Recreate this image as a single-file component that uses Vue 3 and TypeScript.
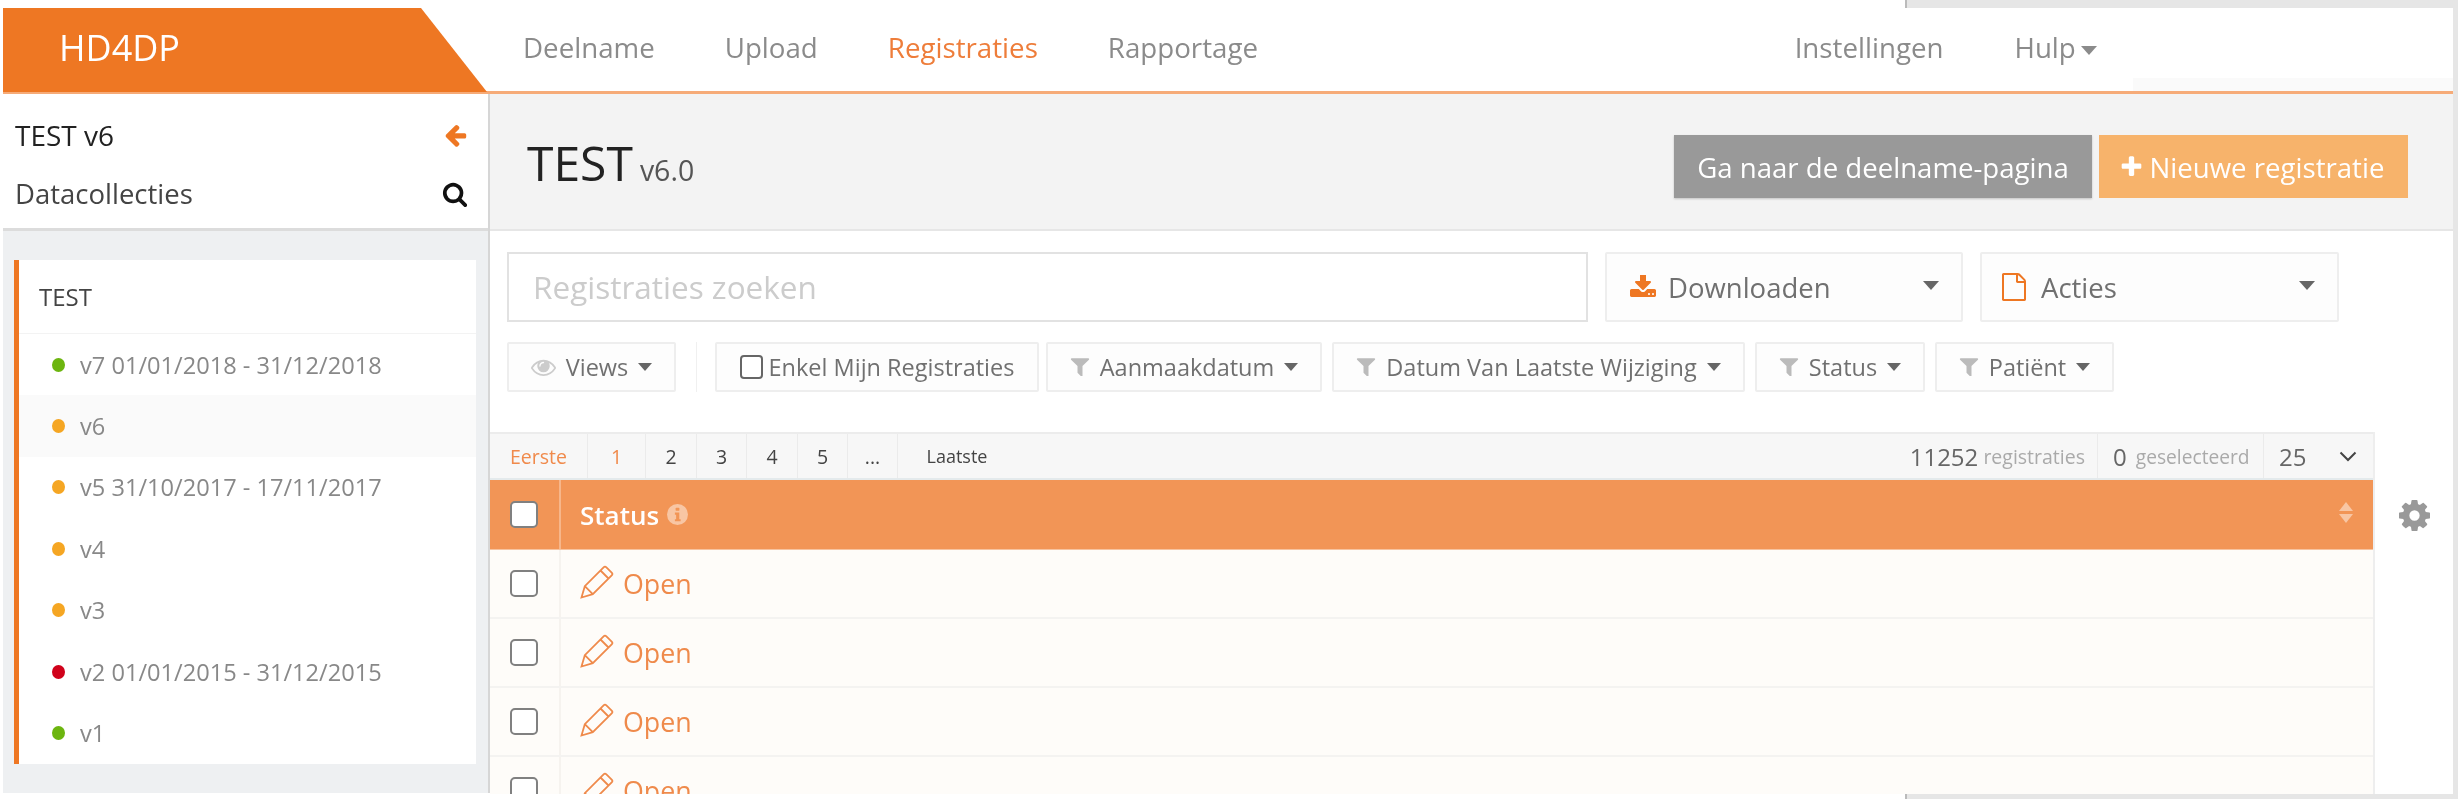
<script setup lang="ts">
interface Version { label: string; color: string; active?: boolean }
const versions: Version[] = [
  { label: 'v7 01/01/2018 - 31/12/2018', color: '#6cb50f' },
  { label: 'v6', color: '#f5a623', active: true },
  { label: 'v5 31/10/2017 - 17/11/2017', color: '#f5a623' },
  { label: 'v4', color: '#f5a623' },
  { label: 'v3', color: '#f5a623' },
  { label: 'v2 01/01/2015 - 31/12/2015', color: '#d0021b' },
  { label: 'v1', color: '#6cb50f' },
]
const filters = [
  { label: 'Aanmaakdatum', cls: 'f-aanmaak' },
  { label: 'Datum Van Laatste Wijziging', cls: 'f-datum' },
  { label: 'Status', cls: 'f-status' },
  { label: 'Patiënt', cls: 'f-patient' },
]
const pages = ['Eerste', '1', '2', '3', '4', '5', '...', 'Laatste']
const rows = [1, 2, 3, 4]
const filterPath = 'M1595 295q17 41-14 70l-493 493v742q0 42-39 59-13 5-25 5-27 0-45-19l-256-256q-19-19-19-45v-486l-493-493q-31-29-14-70 17-39 59-39h1280q42 0 59 39z'
</script>

<template>
  <div class="page">
    <div class="edge edge-top"></div>
    <div class="edge edge-right"></div>
    <div class="edge edge-bottom"></div>

    <div class="frame">
      <header class="topbar">
        <div class="logo">HD4DP</div>
        <nav class="nav">
          <a>Deelname</a>
          <a>Upload</a>
          <a class="current">Registraties</a>
          <a>Rapportage</a>
        </nav>
        <nav class="nav nav-right">
          <a>Instellingen</a>
          <a>Hulp <i class="caret caret-nav"></i></a>
        </nav>
        <div class="top-strip"></div>
      </header>

      <div class="body">
        <aside class="sidebar">
          <div class="side-head">
            <div class="side-row strong">
              <span>TEST v6</span>
              <svg class="ic-arrow" viewBox="0 0 1792 1792"><path d="M1664 896v128q0 53-32.500 90.500t-84.500 37.500h-704l293 294q38 36 38 90t-38 90l-75 76q-37 37-90 37-52 0-91-37l-651-652q-37-37-37-90 0-52 37-91l651-650q38-38 91-38 52 0 90 38l75 74q38 38 38 91t-38 91l-293 293h704q52 0 84.500 37.500t32.500 90.500z"/></svg>
            </div>
            <div class="side-row">
              <span>Datacollecties</span>
              <svg class="ic-search" viewBox="0 0 1792 1792"><path d="M1216 832q0-185-131.500-316.500t-316.500-131.500-316.500 131.500-131.500 316.500 131.500 316.500 316.500 131.500 316.500-131.500 131.500-316.500zm512 832q0 52-38 90t-90 38q-54 0-90-38l-343-342q-179 124-399 124-143 0-273.500-55.500t-225-150-150-225-55.500-273.500 55.500-273.500 150-225 225-150 273.500-55.500 273.500 55.500 225 150 150 225 55.500 273.500q0 220-124 399l343 343q37 37 37 90z"/></svg>
            </div>
          </div>
          <div class="panel">
            <div class="panel-title">TEST</div>
            <div v-for="v in versions" :key="v.label" class="version" :class="{ active: v.active }">
              <span class="dot" :style="{ background: v.color }"></span>
              <span>{{ v.label }}</span>
            </div>
          </div>
        </aside>

        <main class="main">
          <div class="title-strip">
            <h1 class="title"><span>TEST</span><small>v6.0</small></h1>
            <div class="title-actions">
              <button class="btn btn-grey">Ga naar de deelname-pagina</button>
              <button class="btn btn-orange">
                <svg class="ic-plus" viewBox="0 0 1792 1792"><path d="M1600 736v192q0 40-28 68t-68 28h-416v416q0 40-28 68t-68 28h-192q-40 0-68-28t-28-68v-416h-416q-40 0-68-28t-28-68v-192q0-40 28-68t68-28h416v-416q0-40 28-68t68-28h192q40 0 68 28t28 68v416h416q40 0 68 28t28 68z"/></svg>
                Nieuwe registratie
              </button>
            </div>
          </div>

          <div class="toolbar">
            <div class="search">Registraties zoeken</div>
            <div class="select select-down">
              <svg class="ic-down" viewBox="0 128 1792 1536"><path d="M1344 1344q0-26-19-45t-45-19-45 19-19 45 19 45 45 19 45-19 19-45zm256 0q0-26-19-45t-45-19-45 19-19 45 19 45 45 19 45-19 19-45zm128-224v320q0 40-28 68t-68 28h-1472q-40 0-68-28t-28-68v-320q0-40 28-68t68-28h465l135 136q58 56 136 56t136-56l136-136h464q40 0 68 28t28 68zm-325-569q17 41-14 70l-448 448q-18 19-45 19t-45-19l-448-448q-31-29-14-70 17-39 59-39h256v-448q0-26 19-45t45-19h256q26 0 45 19t19 45v448h256q42 0 59 39z"/></svg>
              <span>Downloaden</span>
              <i class="caret caret-big"></i>
            </div>
            <div class="select select-acties">
              <svg class="ic-file" viewBox="128 0 1536 1792"><path d="M1596 380q28 28 48 76t20 88v1152q0 40-28 68t-68 28h-1344q-40 0-68-28t-28-68v-1600q0-40 28-68t68-28h896q40 0 88 20t76 48zm-444-244v376h376q-10-29-22-41l-313-313q-12-12-41-22zm384 1528v-1024h-416q-40 0-68-28t-28-68v-416h-768v1536h1280z"/></svg>
              <span>Acties</span>
              <i class="caret caret-big"></i>
            </div>
          </div>

          <div class="filters">
            <button class="fbtn f-views">
              <svg class="ic-eye" viewBox="0 256 1792 1280"><path d="M1664 960q-152-236-381-353 61 104 61 225 0 185-131.500 316.500t-316.500 131.500-316.500-131.500-131.500-316.500q0-121 61-225-229 117-381 353 133 205 333.500 326.500t434.500 121.500 434.500-121.500 333.500-326.500zm-720-384q0-20-14-34t-34-14q-125 0-214.500 89.500t-89.500 214.500q0 20 14 34t34 14 34-14 14-34q0-86 61-147t147-61q20 0 34-14t14-34zm848 384q0 34-20 69-140 230-376.500 368.500t-499.500 138.500-499.500-139-376.500-368q-20-35-20-69t20-69q140-229 376.500-368t499.500-139 499.500 139 376.500 368q20 35 20 69z"/></svg>
              <span>Views</span>
              <i class="caret caret-small"></i>
            </button>
            <span class="fsep"></span>
            <button class="fbtn f-mine">
              <i class="check check-small"></i>
              <span>Enkel Mijn Registraties</span>
            </button>
            <button v-for="f in filters" :key="f.label" class="fbtn" :class="f.cls">
              <svg class="ic-filter" viewBox="128 256 1536 1344"><path :d="filterPath"/></svg>
              <span>{{ f.label }}</span>
              <i class="caret caret-small"></i>
            </button>
          </div>

          <div class="table-line">
            <div class="table">
              <div class="pager">
                <div class="pages">
                  <span v-for="(p, i) in pages" :key="p" class="pg" :class="{ on: i < 2, first: i === 0, last: i === pages.length - 1 }">{{ p }}</span>
                </div>
                <div class="stats">
                  <span class="stat stat-total"><b>11252</b> registraties</span>
                  <span class="stat stat-sel"><b>0</b> geselecteerd</span>
                  <span class="stat stat-size"><b>25</b>
                    <svg class="ic-chev" viewBox="0 0 18 11"><path d="M1.500 1.500 9 9l7.500-7.500" /></svg>
                  </span>
                </div>
              </div>
              <div class="thead">
                <div class="cell-check"><i class="check check-head"></i></div>
                <div class="cell-status">
                  <span class="th-label">Status</span>
                  <svg class="ic-info" viewBox="0 0 20 20">
                    <circle cx="10" cy="10" r="10" />
                    <rect x="8.200" y="3.500" width="3.600" height="3" rx=".8" />
                    <path d="M7.500 8.200h4.200v6.300h1.300v2H7.500v-2h1.200v-4.300H7.500z" />
                  </svg>
                  <svg class="ic-sort" viewBox="0 0 16 21">
                    <path class="up" d="M8 0l7 9H1z" />
                    <path class="dn" d="M1 12h14l-7 9z" />
                  </svg>
                </div>
              </div>
              <div v-for="r in rows" :key="r" class="trow">
                <div class="cell-check"><i class="check"></i></div>
                <div class="cell-status cell-open">
                  <svg class="ic-pencil" viewBox="0 0 34 34"><path d="M1.500 32.500 4.800 21.200 23.600 2.300a2 2 0 0 1 2.800 0l5.300 5.300a2 2 0 0 1 0 2.800L12.800 29.200zM4.800 21.200l8 8M20.500 5.500l8 8"/></svg>
                  <span>Open</span>
                </div>
              </div>
            </div>
            <svg class="ic-gear" viewBox="128 128 1536 1536"><path d="M1152 896q0-106-75-181t-181-75-181 75-75 181 75 181 181 75 181-75 75-181zm512-109v222q0 12-8 23t-20 13l-185 28q-19 54-39 91 35 50 107 138 10 12 10 25t-9 23q-27 37-99 108t-94 71q-12 0-26-9l-138-108q-44 23-91 38-16 136-29 186-7 28-36 28h-222q-14 0-24.500-8.500t-11.500-21.500l-28-184q-49-16-90-37l-141 107q-10 9-25 9-14 0-25-11-126-114-165-168-7-10-7-23 0-12 8-23 15-21 51-66.500t54-70.500q-27-50-41-99l-183-27q-13-2-21-12.500t-8-23.500v-222q0-12 8-23t19-13l186-28q14-46 39-92-40-57-107-138-10-12-10-24 0-10 9-23 26-36 98.500-107.500t94.500-71.500q13 0 26 10l138 107q44-23 91-38 16-136 29-186 7-28 36-28h222q14 0 24.500 8.500t11.500 21.500l28 184q49 16 90 37l142-107q9-9 24-9 13 0 25 10 129 119 165 170 7 8 7 22 0 12-8 23-15 21-51 66.500t-54 70.500q26 50 41 98l183 28q13 2 21 12.500t8 23.500z"/></svg>
          </div>
        </main>
      </div>
    </div>
  </div>
</template>

<style scoped>
* { box-sizing: border-box; }
.page {
  position: relative;
  width: 2458px;
  height: 799px;
  overflow: hidden;
  background: #fff;
  font-family: "Open Sans", sans-serif;
  color: #555;
}
.edge { position: absolute; background: #e6e6e6; }
.edge-top { top: 0; left: 1905px; right: 0; height: 8px; border-left: 2px solid #bbb; }
.edge-right { top: 0; bottom: 0; right: 0; width: 5px; }
.edge-bottom { bottom: 0; left: 1905px; right: 0; height: 5px; border-left: 2px solid #bbb; }

.frame {
  position: relative;
  margin: 8px 5px 0 3px;
  height: 786px;
  display: flex;
  flex-direction: column;
  overflow: hidden;
  background: #fff;
  filter: blur(.45px);
}

/* Top bar */
.topbar {
  position: relative;
  flex: none;
  height: 86px;
  display: flex;
  border-bottom: 3px solid #f6ab78;
}
.logo {
  width: 484px;
  height: 84px;
  padding: 16px 0 0 56px;
  flex: none;
  background: #ee7723;
  clip-path: polygon(0 0, 418px 0, 484px 100%, 0 100%);
  color: #fff;
  font-size: 36px;
  line-height: 48px;
}
.nav {
  display: flex;
  gap: 70px;
  padding-left: 36px;
  font-size: 27.700px;
  line-height: 37px;
  padding-top: 21px;
  color: #8b8b8b;
}
.nav .current { color: #ee7d3a; }
.nav-right { margin-left: auto; padding-right: 356px; gap: 71px; }
.top-strip {
  position: absolute;
  right: 0;
  bottom: 0;
  width: 320px;
  height: 13px;
  background: #fafafa;
}
.caret {
  display: inline-block;
  width: 0;
  height: 0;
  border-left: 8px solid transparent;
  border-right: 8px solid transparent;
  border-top: 9px solid #666;
}
.caret-small { border-left-width: 7px; border-right-width: 7px; border-top-width: 8px; }
.caret-nav { border-top-color: #8b8b8b; vertical-align: 3px; margin-left: -2px; }

/* Sidebar */
.body { flex: 1; display: flex; min-height: 0; }
.sidebar {
  flex: none;
  width: 487px;
  background: #eef0f2;
  border-right: 2px solid #d6d6d6;
  height: 699px;
}
.side-head {
  height: 137px;
  background: #fff;
  border-bottom: 3px solid #dcdcdc;
  padding: 11px 20px 0 12px;
}
.side-row {
  height: 59px;
  display: flex;
  align-items: center;
  justify-content: space-between;
  font-size: 27.500px;
  color: #444;
}
.side-row.strong { color: #222; font-size: 28px; }
.ic-arrow { width: 25px; height: 26px; fill: #ee7723; }
.ic-search { width: 26px; height: 26px; fill: #111; }
.panel {
  margin: 29px 0 0 11px;
  width: 462px;
  background: #fff;
  border-left: 5px solid #ee7723;
}
.panel-title {
  height: 74px;
  padding-left: 20px;
  display: flex;
  align-items: center;
  font-size: 24px;
  color: #444;
  border-bottom: 1px solid #f3f3f3;
}
.version {
  height: 61.4px;
  display: flex;
  align-items: center;
  padding-left: 33px;
  gap: 15px;
  font-size: 23.600px;
  color: #888;
}
.version.active { background: #fafafa; }
.dot { width: 13px; height: 14px; border-radius: 50%; flex: none; }

/* Main */
.main { flex: 1; min-width: 0; overflow: hidden; background: #fff; }
.title-strip {
  height: 137px;
  padding: 41px 45px 0 37px;
  background: #f3f3f3;
  border-bottom: 2px solid #e6e6e6;
  display: flex;
  justify-content: space-between;
}
.title {
  margin: 0;
  display: flex;
  align-items: baseline;
  gap: 7px;
  height: 56px;
  font-weight: 400;
  font-size: 48px;
  line-height: 56px;
  color: #222;
}
.title small { font-size: 28.500px; line-height: 40px; color: #555; }
.title-actions { display: flex; gap: 7px; }
.btn {
  height: 63px;
  border: 0;
  color: #fff;
  font-family: inherit;
  font-size: 27.600px;
  display: flex;
  align-items: center;
  justify-content: center;
  gap: 6px;
  padding: 0;
}
.btn-grey { width: 418px; background: #999; box-shadow: 0 1px 2px rgba(0, 0, 0, .2); }
.btn-orange { width: 309px; background: #f7b36b; }
.ic-plus { width: 25px; height: 26px; fill: #fff; margin-left: -4px; }

.toolbar {
  margin: 21px 0 0 17px;
  display: flex;
  gap: 17px;
}
.search {
  width: 1081px;
  height: 70px;
  border: 2px solid #e2e2e2;
  padding: 0 0 2px 24px;
  display: flex;
  align-items: center;
  font-size: 31.500px;
  color: #ccc;
}
.select {
  position: relative;
  width: 358px;
  height: 70px;
  background: #fdfdfd;
  border: 2px solid #eeeeee;
  border-radius: 2px;
  display: flex;
  align-items: center;
  padding-left: 22px;
  gap: 11px;
  font-size: 27.500px;
  color: #707070;
}
.select-acties { width: 359px; padding-left: 20px; gap: 15px; }
.caret-big {
  position: absolute;
  right: 22px;
  top: 27px;
}
.ic-down { width: 28px; height: 24px; fill: #ee7723; }
.ic-file { width: 24px; height: 28px; fill: #ee7723; }

.filters {
  margin: 20px 0 0 17px;
  display: flex;
  height: 50px;
  gap: 10px;
}
.fbtn {
  height: 50px;
  padding: 0;
  background: #fdfdfd;
  border: 2px solid #eeeeee;
  border-radius: 2px;
  display: flex;
  align-items: center;
  justify-content: center;
  gap: 10px;
  font-family: inherit;
  font-size: 23.500px;
  color: #707070;
}
.fsep { width: 1px; height: 50px; background: #f0f0f0; margin: 0 8px 0 10px; }
.f-views { width: 169px; }
.f-mine { width: 324px; margin-right: -3px; gap: 6px; }
.f-aanmaak { width: 276px; }
.f-datum { width: 413px; }
.f-status { width: 170px; }
.f-patient { width: 179px; }
.ic-eye { width: 25px; height: 18px; fill: #ccc; }
.ic-filter { width: 20px; height: 18px; fill: #bbb; }

/* Table */
.table-line { margin-top: 40px; display: flex; align-items: flex-start; }
.table { width: 1885px; flex: none; border-right: 2px solid #eeeeee; }
.pager {
  height: 48px;
  display: flex;
  justify-content: space-between;
  background: #f7f7f7;
  border-top: 2px solid #ececec;
  border-bottom: 2px solid #e4eaec;
}
.pages {
  display: grid;
  grid-template-columns: 98px 58px 51px 50px 51px 50px 50px 118px;
  color: #444;
}
.pg {
  display: flex;
  align-items: center;
  justify-content: center;
  border-right: 1px solid #ebebeb;
  font-size: 19.500px;
}
.pg.on { color: #f08a4b; }
.pg.first { font-size: 19.500px; }
.pg.last { font-size: 18px; border-right: 0; }
.stats { display: flex; color: #aaa; }
.stat {
  display: flex;
  align-items: center;
  gap: 6px;
  border-left: 1px solid #ebebeb;
  padding: 0 15px;
  white-space: pre;
}
.stat b { font-weight: 400; font-size: 24px; color: #666; }
.stat-total { border-left: 0; font-size: 19.500px; gap: 0; padding-right: 12px; }
.stat-sel { width: 166px; font-size: 19.200px; gap: 4px; padding-right: 0; }
.stat-size { width: 110px; padding-right: 0; gap: 0; }
.ic-chev { width: 18px; height: 11px; margin-left: 33px; fill: none; stroke: #444; stroke-width: 2; }

.thead, .trow { display: flex; }
.thead {
  height: 70px;
  background: #f29556;
  color: #fff;
  border-bottom: 1px solid #f7c39f;
}
.cell-check {
  width: 71px;
  flex: none;
  padding-left: 20px;
  display: flex;
  align-items: center;
  border-right: 2px solid #f7b68a;
}
.cell-status { flex: 1; position: relative; display: flex; align-items: center; padding-left: 19px; }
.th-label { font-size: 26px; font-weight: 600; }
.ic-info { width: 21px; height: 21px; margin-left: 8px; }
.ic-info circle { fill: #f8c6a4; }
.ic-info rect, .ic-info path { fill: #f29556; }
.ic-sort { position: absolute; right: 19px; top: 22px; width: 16px; height: 21px; }
.ic-sort .up { fill: #f8c6a4; }
.ic-sort .dn { fill: #f8c6a4; }
.trow {
  height: 69px;
  background: #fefcf9;
  border-bottom: 2px solid #f4f3f1;
}
.trow .cell-check { border-right: 2px solid #f6f3ef; }
.cell-open { color: #ef8a4b; font-size: 26.800px; gap: 9px; }
.ic-pencil { width: 34px; height: 34px; margin-top: -4px; fill: none; stroke: #ef8a4b; stroke-width: 1.800; }
.check {
  display: block;
  width: 28px;
  height: 27px;
  background: #fff;
  border: 2px solid #808080;
  border-radius: 5px;
}
.check-small { width: 23px; height: 24px; border-radius: 4px; border-color: #666; }
.ic-gear { width: 31px; height: 31px; margin: 68px 0 0 24px; fill: #999; flex: none; }
</style>

<style>
html, body { margin: 0; background: #fff; }
</style>
